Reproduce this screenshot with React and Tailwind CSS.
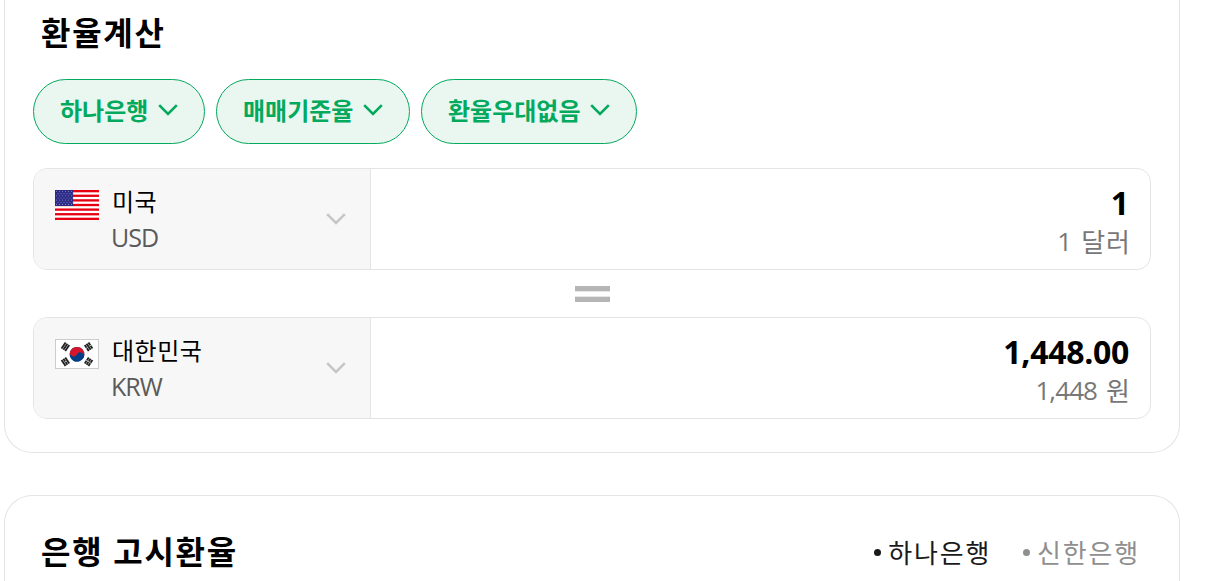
import React from "react";

const FILTERS = [
  { label: "하나은행", width: "w-[172px]" },
  { label: "매매기준율", width: "w-[194px]" },
  { label: "환율우대없음", width: "w-[216px]" },
];

const STRIPES = [0, 1, 2, 3, 4, 5, 6];
const STAR_ROWS = [0, 1, 2, 3, 4, 5, 6];
const STAR_COLS = [0, 1, 2, 3, 4, 5];

function Chevron({ className }) {
  return (
    <svg className={className} width="20" height="14" viewBox="0 0 20 14" fill="none">
      <path d="M1.2 2.2 10 11 18.8 2.2" stroke="currentColor" strokeWidth="2.6" />
    </svg>
  );
}

function FlagUS() {
  return (
    <svg width="44" height="30" viewBox="0 0 44 30">
      <rect width="44" height="30" fill="#fff" />
      {STRIPES.map((i) => (
        <rect key={i} y={(i * 60) / 13} width="44" height={30 / 13} fill="#e60012" />
      ))}
      <rect width="18" height="16" fill="#2b2a86" />
      {STAR_ROWS.map((r) =>
        STAR_COLS.map((c) => (
          <circle
            key={`${r}-${c}`}
            cx={1.5 + c * 3 + (r % 2 ? 1.5 : 0)}
            cy={1.5 + r * 2.15}
            r="0.55"
            fill="#8583c4"
          />
        ))
      )}
    </svg>
  );
}

// broken: which of the three bars are split in the middle
function Trigram({ x, y, angle, broken }) {
  return (
    <g transform={`translate(${x} ${y}) rotate(${angle})`}>
      {[-2.2, 0, 2.2].map((dy, i) => (
        <g key={dy}>
          <rect x="-3.6" y={dy - 0.95} width="7.2" height="1.9" fill="#222" />
          {broken[i] && <rect x="-0.3" y={dy - 0.95} width="0.6" height="1.9" fill="#fff" />}
        </g>
      ))}
    </g>
  );
}

function FlagKR() {
  return (
    <svg width="44" height="30" viewBox="0 0 44 30">
      <rect x="0.5" y="0.5" width="43" height="29" fill="#fff" stroke="#ccc" />
      <g transform="translate(22 15.4) rotate(28)">
        <circle r="7.4" fill="#003f87" />
        <path d="M-7.4 0A7.4 7.4 0 0 1 7.4 0Z" fill="#d5152c" />
        <circle cx="-3.7" r="3.7" fill="#d5152c" />
        <circle cx="3.7" r="3.7" fill="#003f87" />
      </g>
      <Trigram x={10.4} y={7.8} angle={-56} broken={[false, false, false]} />
      <Trigram x={33.6} y={7.8} angle={56} broken={[true, false, true]} />
      <Trigram x={10.4} y={22.7} angle={56} broken={[false, true, false]} />
      <Trigram x={33.6} y={22.7} angle={-56} broken={[true, true, true]} />
    </svg>
  );
}

function CurrencyRow({ flag, country, code, amount, amountClass, count, countClass, unit }) {
  return (
    <div className="flex h-[102px] overflow-hidden rounded-[14px] border border-[#e4e4e4]">
      <div className="flex w-[337px] shrink-0 border-r border-[#e4e4e4] bg-[#f7f7f7] pl-[21px] pt-[15px]">
        <div className="mr-3 mt-[6px] shrink-0">{flag}</div>
        <div className="flex-1">
          <div className="pl-px text-[24px] leading-9 tracking-[0.5px] text-black">{country}</div>
          <div className="-mt-px text-[25px] leading-9 tracking-[-1px] text-[#5a5a5a]">{code}</div>
        </div>
        <Chevron className="mr-[24px] mt-[28px] text-[#c6c6c6]" />
      </div>
      <div className="flex-1 pr-[20px] pt-[14px] text-right">
        <div className={`text-[32px] font-bold leading-10 text-black ${amountClass}`}>{amount}</div>
        <div className="flex justify-end text-[26px] leading-9 text-[#777]">
          <span className={countClass}>{count}</span>
          <span className="-mr-px pt-px tracking-[1px]">{unit}</span>
        </div>
      </div>
    </div>
  );
}

export default function App() {
  return (
    <div className="h-[581px] overflow-hidden bg-white pl-1 font-['Open_Sans','Noto_Sans_CJK_KR',sans-serif]">
      {/* 환율계산 */}
      <section className="h-[453px] w-[1176px] rounded-b-[28px] border border-t-0 border-[#e4e4e4] px-7">
        <h2 className="h-[79px] pl-2 pt-[9px] text-[32px] font-bold leading-[48px] tracking-[1.7px] text-black">
          환율계산
        </h2>

        <div className="flex gap-[11px]">
          {FILTERS.map((f) => (
            <button
              key={f.label}
              className={`flex h-[65px] items-center justify-between rounded-full border border-[#03a95c] bg-[#eaf7f1] pb-px pl-[26px] pr-[26px] text-[24px] font-bold text-[#03a95c] ${f.width}`}
            >
              <span className="whitespace-nowrap">{f.label}</span>
              <Chevron className="-mt-0.5" />
            </button>
          ))}
        </div>

        <div className="mt-6">
          <CurrencyRow
            flag={<FlagUS />}
            country="미국"
            code="USD"
            amount="1"
            amountClass="pr-px"
            count="1"
            countClass="mr-[9px]"
            unit="달러"
          />
          <div className="flex h-[47px] flex-col items-center gap-1 pt-4">
            <div className="h-[6px] w-[35px] border-b border-[#e6e6e6] bg-[#b5b5b6]" />
            <div className="h-[6px] w-[35px] border-t border-[#e6e6e6] bg-[#b5b5b6]" />
          </div>
          <CurrencyRow
            flag={<FlagKR />}
            country="대한민국"
            code="KRW"
            amount="1,448.00"
            amountClass="pr-px tracking-[-0.3px]"
            count="1,448"
            countClass="mr-[9px] tracking-[-0.9px]"
            unit="원"
          />
        </div>
      </section>

      {/* 은행 고시환율 */}
      <section className="mt-[42px] flex h-[200px] w-[1176px] items-start justify-between rounded-t-[28px] border border-b-0 border-[#e4e4e4] pl-9 pr-[39px] pt-8">
        <h2 className="text-[32px] font-bold leading-[48px] tracking-[1.7px] text-black">은행 고시환율</h2>
        <div className="flex gap-8 pt-[7px] text-[26px] leading-9 tracking-[1.8px]">
          <div className="flex items-center gap-[7px] text-[#1a1a1a]">
            <span className="-mt-0.5 h-[7px] w-[7px] rounded-full bg-current" />
            하나은행
          </div>
          <div className="flex items-center gap-[7px] text-[#8f8f8f]">
            <span className="-mt-0.5 h-[7px] w-[7px] rounded-full bg-current" />
            신한은행
          </div>
        </div>
      </section>
    </div>
  );
}
